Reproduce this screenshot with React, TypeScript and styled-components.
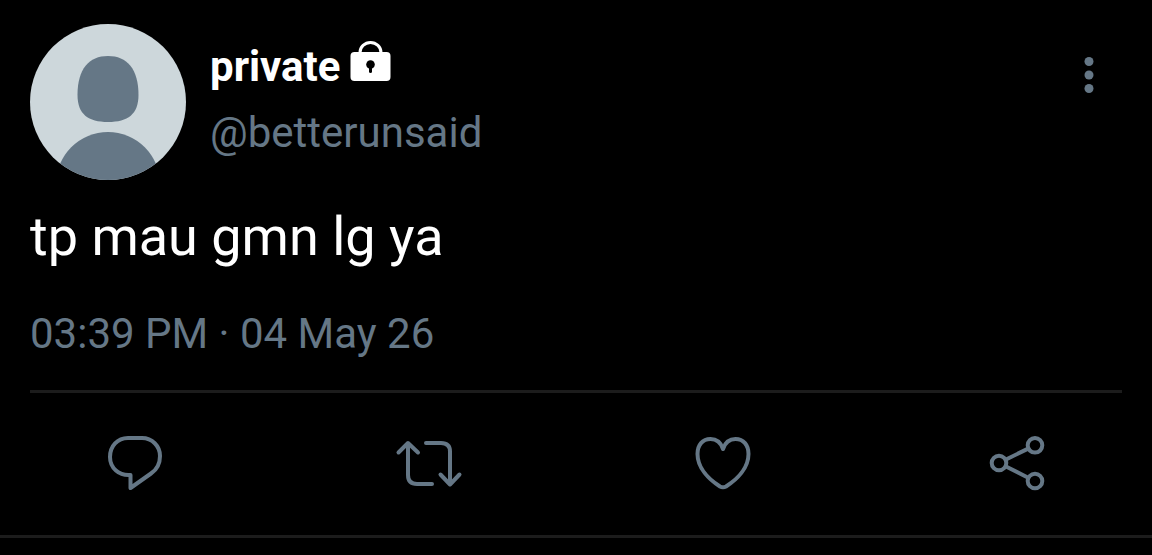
import React from "react";
import styled, { createGlobalStyle } from "styled-components";

const muted = "#657786";

const GlobalStyle = createGlobalStyle`
  * {
    box-sizing: border-box;
  }
  body {
    margin: 0;
    background: #000;
    color: #fff;
    font-family: Roboto, "Liberation Sans", sans-serif;
  }
`;

const Post = styled.article`
  padding-top: 24px;
  border-bottom: 3px solid #1c1c1c;
`;

const Header = styled.header`
  display: flex;
  align-items: flex-start;
  gap: 24px;
  padding: 0 30px;
`;

const Avatar = styled.svg`
  flex: none;
  width: 156px;
  height: 156px;
  border-radius: 50%;
`;

const Author = styled.div`
  flex: 1;
  min-width: 0;
  padding-top: 10px;
`;

const NameRow = styled.div`
  display: flex;
  align-items: center;
  gap: 10px;
  height: 66px;
`;

const Name = styled.span`
  font-size: 42px;
  font-weight: 700;
  line-height: 66px;
`;

const LockIcon = styled.svg`
  width: 42px;
  height: 42px;
  margin-bottom: 12px;
`;

const Handle = styled.a`
  display: block;
  color: ${muted};
  font-size: 42px;
  line-height: 66px;
  text-decoration: none;
`;

const IconButton = styled.button`
  flex: none;
  width: 66px;
  height: 66px;
  padding: 0;
  border: 0;
  background: none;
  color: ${muted};
  cursor: pointer;
`;

const MenuButton = styled(IconButton)`
  margin-top: 18px;
`;

const Icon = styled.svg`
  display: block;
  width: 66px;
  height: 66px;
  overflow: visible;
  fill: none;
  stroke: currentColor;
  stroke-width: 4;
  stroke-linecap: round;
  stroke-linejoin: round;
`;

const Message = styled.p`
  margin: 25px 30px 40px;
  font-size: 54px;
  line-height: 64px;
`;

const Timestamp = styled.time`
  display: block;
  margin: 0 30px;
  padding-bottom: 31px;
  border-bottom: 3px solid #1c1c1c;
  color: ${muted};
  font-size: 42px;
  line-height: 50px;
`;

const Actions = styled.footer`
  display: flex;
  justify-content: space-between;
  padding: 37px 102px 39px;
`;

const actions = [
  {
    label: "Reply",
    drawing: (
      <path d="M26 8H40C50 8 58 16 58 26C58 33 55 39.500 49 43.500L28.500 58V45C17 46 8 38 8 27C8 16 15.500 8 26 8Z" />
    ),
  },
  {
    label: "Retweet",
    drawing: (
      <>
        <path d="M2.500 22.500L12 13L22 22.500M12 13.500V45Q12 54 21 54H36" />
        <path d="M30 13H45Q54 13 54 21.500V54M44.500 44.500L54 54.500L63.500 44.500" />
      </>
    ),
  },
  {
    label: "Like",
    drawing: (
      <path d="M33 19C31 13 26.500 9 20.500 9C12.500 9 7.500 15 7.500 24C7.500 38 19 49.500 30 56.500Q33 58.200 36 56.500C47 49.500 58.500 38 58.500 24C58.500 15 53.500 9 45.500 9C39.500 9 35 13 33 19Z" />
    ),
  },
  {
    label: "Share",
    drawing: (
      <>
        <circle cx="15" cy="33" r="7.300" />
        <circle cx="51" cy="15.300" r="7.300" />
        <circle cx="51" cy="51" r="7.300" />
        <path d="M22 29.500L44.200 18.600M22 36.500L44.200 47.700" />
      </>
    ),
  },
];

export default function App() {
  return (
    <>
      <GlobalStyle />
      <Post>
        <Header>
          <Avatar viewBox="0 0 156 156" role="img" aria-label="Profile picture">
            <rect width="156" height="156" fill="#cdd7db" />
            <path
              fill={muted}
              d="M78 32C97 32 108.500 45 108.500 71C108.500 90 98 98 78 98C58 98 47.500 90 47.500 71C47.500 45 59 32 78 32Z"
            />
            <circle cx="78" cy="160" r="52" fill={muted} />
          </Avatar>
          <Author>
            <NameRow>
              <Name>private</Name>
              <LockIcon viewBox="0 0 42 42" role="img" aria-label="Protected account">
                <path d="M10 14V12.500A10.500 10 0 0 1 31 12.500V14" fill="none" stroke="#fff" strokeWidth="3" />
                <rect x="0.500" y="12" width="40" height="29" rx="4" fill="#fff" />
                <circle cx="20.500" cy="24.500" r="4.300" fill="#000" />
                <path d="M20.500 25V31.500" stroke="#000" strokeWidth="3" strokeLinecap="round" />
              </LockIcon>
            </NameRow>
            <Handle href="#betterunsaid">@betterunsaid</Handle>
          </Author>
          <MenuButton type="button" aria-label="More">
            <Icon viewBox="0 0 66 66">
              <g fill="currentColor" stroke="none">
                <circle cx="33" cy="19.500" r="4.500" />
                <circle cx="33" cy="33" r="4.500" />
                <circle cx="33" cy="46.500" r="4.500" />
              </g>
            </Icon>
          </MenuButton>
        </Header>
        <Message>tp mau gmn lg ya</Message>
        <Timestamp dateTime="2026-05-04T15:39">03:39 PM · 04 May 26</Timestamp>
        <Actions>
          {actions.map(({ label, drawing }) => (
            <IconButton key={label} type="button" aria-label={label}>
              <Icon viewBox="0 0 66 66">{drawing}</Icon>
            </IconButton>
          ))}
        </Actions>
      </Post>
    </>
  );
}
